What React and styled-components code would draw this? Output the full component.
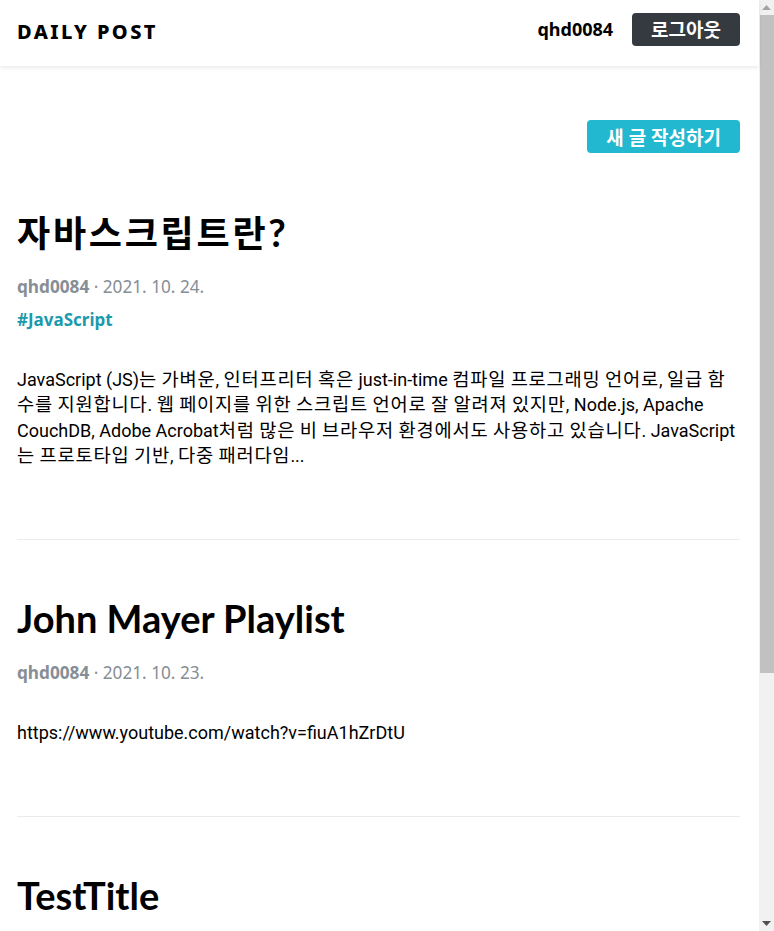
import React from "react";
import styled, { createGlobalStyle } from "styled-components";

const GlobalStyle = createGlobalStyle`
  html, body { margin: 0; padding: 0; background: #fff; }
  body {
    font-family: "Noto Sans", "Noto Sans CJK KR", sans-serif;
    color: #000;
  }
  * { box-sizing: border-box; }
`;

/* ---------- fake browser scrollbar (part of the picture) ---------- */
const Shell = styled.div`
  display: flex;
  align-items: flex-start;
  width: 100%;
`;

const Page = styled.div`
  flex: 1;
  min-width: 0;
`;

const ScrollRail = styled.aside`
  width: 15px;
  height: 100vh;
  flex-shrink: 0;
  background: #f1f1f1;
  display: flex;
  flex-direction: column;
`;

const RailArrow = styled.div`
  height: 15px;
  display: flex;
  align-items: center;
  justify-content: center;
`;

const RailTrack = styled.div`
  flex: 1;
  display: flex;
  flex-direction: column;
`;

const RailThumb = styled.div`
  margin-left: 1px;
  height: 658px;
  background: #c1c1c1;
`;

/* ---------- header ---------- */
const HeaderBar = styled.header`
  width: 100%;
  height: 66px;
  background: #fff;
  box-shadow: 0px 2px 4px rgba(0, 0, 0, 0.08);
  position: relative;
  z-index: 1;
`;

const Responsive = styled.div`
  padding: 0 19px 0 17px;
  width: 100%;
`;

const HeaderInner = styled(Responsive)`
  height: 100%;
  display: flex;
  align-items: center;
  justify-content: space-between;
`;

const Logo = styled.div`
  font-size: 20px;
  font-weight: 800;
  letter-spacing: 2.4px;
  margin-top: -3px;
`;

const Right = styled.div`
  display: flex;
  align-items: center;
  gap: 19px;
  margin-top: -8px;
`;

const UserInfo = styled.div`
  font-weight: 700;
  font-size: 18px;
`;

const Button = styled.button`
  border: none;
  border-radius: 4px;
  font-family: "Noto Sans", "Noto Sans CJK KR", sans-serif;
  font-size: 19px;
  font-weight: 700;
  color: #fff;
  height: 33px;
  padding: 0 19px;
  background: ${(p) => (p.$cyan ? "#22b8cf" : "#343a40")};
  cursor: pointer;
  display: inline-flex;
  align-items: center;
  justify-content: center;
`;

/* ---------- list ---------- */
const WriteWrapper = styled.div`
  display: flex;
  justify-content: flex-end;
  margin-top: 54px;
`;

const PostItem = styled.div`
  padding-top: 55px;
  padding-bottom: 71px;
  & + & {
    border-top: 1px solid #e9ecef;
    padding-top: 54px;
  }
`;

const Title = styled.h2`
  margin: 0;
  font-family: Lato, "Noto Sans CJK KR", sans-serif;
  font-size: 38px;
  line-height: 48px;
  font-weight: 700;
`;

const SubInfo = styled.div`
  margin-top: 19px;
  color: #868e96;
  font-size: 17.2px;
  line-height: 24px;
  b { font-weight: 700; }
`;

const Tags = styled.div`
  margin-top: 9px;
  font-size: 17px;
  line-height: 24px;
  font-weight: 700;
  color: #1c9aad;
`;

const Body = styled.p`
  margin: 35px 0 0;
  font-family: Roboto, "Noto Sans CJK KR", sans-serif;
  font-size: 18px;
  line-height: 25.3px;
  color: #000;
`;

const Hangul = styled.span`
  font-family: "Noto Sans CJK KR", sans-serif;
  font-size: ${(p) => p.$scale}em;
  letter-spacing: ${(p) => p.$track}em;
  line-height: 1;
`;

const Pagination = styled.div`
  width: 320px;
  margin: 0 auto 48px;
  display: flex;
  justify-content: space-between;
  align-items: center;
  font-size: 17px;
`;

const HANGUL = /([\u1100-\u11FF\u3130-\u318F\uAC00-\uD7A3]+)/;

function KoText({ text, scale, track }) {
  return text.split(HANGUL).map((part, i) =>
    i % 2 === 1 ? (
      <Hangul key={i} $scale={scale} $track={track}>
        {part}
      </Hangul>
    ) : (
      part
    )
  );
}

const posts = [
  {
    title: "자바스크립트란?",
    user: "qhd0084",
    date: "2021. 10. 24.",
    tags: ["JavaScript"],
    body:
      "JavaScript (JS)는 가벼운, 인터프리터 혹은 just-in-time 컴파일 프로그래밍 언어로, 일급 함수를 지원합니다. 웹 페이지를 위한 스크립트 언어로 잘 알려져 있지만, Node.js, Apache CouchDB, Adobe Acrobat처럼 많은 비 브라우저 환경에서도 사용하고 있습니다. JavaScript는 프로토타입 기반, 다중 패러다임...",
  },
  {
    title: "John Mayer Playlist",
    user: "qhd0084",
    date: "2021. 10. 23.",
    tags: [],
    body: "https://www.youtube.com/watch?v=fiuA1hZrDtU",
  },
  {
    title: "TestTitle",
    user: "qhd0084",
    date: "2021. 10. 22.",
    tags: [],
    body: "TestBody",
  },
];

export default function App() {
  return (
    <>
      <GlobalStyle />
      <Shell>
        <Page>
          <HeaderBar>
            <HeaderInner>
              <Logo>DAILY POST</Logo>
              <Right>
                <UserInfo>qhd0084</UserInfo>
                <Button>로그아웃</Button>
              </Right>
            </HeaderInner>
          </HeaderBar>
          <Responsive>
            <WriteWrapper>
              <Button $cyan>새 글 작성하기</Button>
            </WriteWrapper>
            {posts.map((p) => (
              <PostItem key={p.title}>
                <Title>
                  <KoText text={p.title} scale={0.95} track={0.075} />
                </Title>
                <SubInfo>
                  <b>{p.user}</b> · <span>{p.date}</span>
                </SubInfo>
                {p.tags.length > 0 && (
                  <Tags>{p.tags.map((t) => `#${t}`).join(" ")}</Tags>
                )}
                <Body>
                  <KoText text={p.body} scale={1.04} track={0.042} />
                </Body>
              </PostItem>
            ))}
            <Pagination>
              <Button>이전</Button>
              <span>1</span>
              <Button>다음</Button>
            </Pagination>
          </Responsive>
        </Page>
        <ScrollRail>
          <RailArrow>
            <svg width="9" height="5" viewBox="0 0 9 5">
              <polygon points="0,5 9,5 4.5,0" fill="#a3a3a3" />
            </svg>
          </RailArrow>
          <RailTrack>
            <RailThumb />
          </RailTrack>
          <RailArrow>
            <svg width="9" height="5" viewBox="0 0 9 5">
              <polygon points="0,0 9,0 4.5,5" fill="#505050" />
            </svg>
          </RailArrow>
        </ScrollRail>
      </Shell>
    </>
  );
}
